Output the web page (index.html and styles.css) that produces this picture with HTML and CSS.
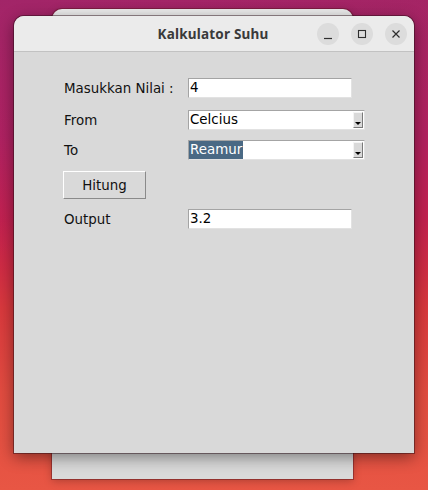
FILE: index.html
```html
<!DOCTYPE html>
<html>
<head>
<meta charset="utf-8">
<link rel="stylesheet" href="styles.css">
</head>
<body>
<div class="desktop">
  <div class="window back"></div>
  <div class="window main">
    <div class="titlebar">
      <div class="title">Kalkulator Suhu</div>
      <div class="controls">
        <span class="ctl"><svg width="22" height="22" viewBox="0 0 22 22"><path d="M7 15.5h8" stroke="#2e2e2e" stroke-width="1.2" fill="none"/></svg></span>
        <span class="ctl"><svg width="22" height="22" viewBox="0 0 22 22"><rect x="7.5" y="7.5" width="7" height="7" stroke="#2e2e2e" stroke-width="1.1" fill="none"/></svg></span>
        <span class="ctl"><svg width="22" height="22" viewBox="0 0 22 22"><path d="M7.5 7.5l7 7M14.5 7.5l-7 7" stroke="#2e2e2e" stroke-width="1.2" fill="none"/></svg></span>
      </div>
    </div>
    <div class="content">
      <div class="row r1">
        <label class="lbl">Masukkan Nilai :</label>
        <div class="entry">4</div>
      </div>
      <div class="row r2">
        <label class="lbl">From</label>
        <div class="combo"><span class="val">Celcius</span><span class="arrow"></span></div>
      </div>
      <div class="row r3">
        <label class="lbl">To</label>
        <div class="combo"><span class="val sel">Reamur</span><span class="arrow"></span></div>
      </div>
      <div class="row r4">
        <div class="btn">Hitung</div>
      </div>
      <div class="row r5">
        <label class="lbl">Output</label>
        <div class="entry">3.2</div>
      </div>
    </div>
  </div>
</div>
</body>
</html>
```
FILE: styles.css
```css
html, body {
  margin: 0;
  padding: 0;
}
body {
  width: 428px;
  height: 490px;
  overflow: hidden;
}
.desktop {
  position: relative;
  width: 428px;
  height: 490px;
  background:
    linear-gradient(160deg, rgba(150,40,120,0.25) 0%, rgba(150,40,120,0) 40%),
    linear-gradient(180deg, #a62463 0%, #b3215f 28%, #c4214f 45%, #d02c44 55%, #d9393d 63%, #e24c40 80%, #e85644 100%);
}
.window {
  position: absolute;
  box-sizing: border-box;
}
.back {
  left: 52px;
  top: 9px;
  width: 301px;
  height: 470px;
  background: #d9d9d9;
  border-radius: 10px 10px 0 0;
  box-shadow: 0 0 0 1px rgba(90,20,30,0.45), 0 2px 8px rgba(0,0,0,0.25);
  background-image: linear-gradient(180deg, #ececec 0, #ececec 36px, #d9d9d9 37px);
}
.main {
  left: 14px;
  top: 16px;
  width: 400px;
  height: 437px;
  background: #d9d9d9;
  border-radius: 10px 10px 0 0;
  box-shadow: 0 0 0 1px rgba(40,10,20,0.45), 0 4px 16px rgba(0,0,0,0.45);
  display: flex;
  flex-direction: column;
}
.titlebar {
  height: 36px;
  flex: none;
  box-sizing: border-box;
  background: #ebebeb;
  border-bottom: 1px solid #c2c2c2;
  border-radius: 10px 10px 0 0;
  position: relative;
  display: flex;
  align-items: center;
  justify-content: center;
}
.title {
  font-family: "Noto Sans", "DejaVu Sans", sans-serif;
  font-weight: 700;
  font-size: 13.5px;
  color: #3a3a3a;
  letter-spacing: 0.2px;
  margin-left: -2px;
}
.controls {
  position: absolute;
  right: 7px;
  top: 7px;
  display: flex;
  gap: 12px;
}
.ctl {
  width: 22px;
  height: 22px;
  border-radius: 50%;
  background: #dcdcdc;
  display: block;
}
.ctl svg { display: block; }
.content {
  padding: 26px 0 0 50px;
  font-family: "DejaVu Sans", sans-serif;
  font-size: 13.4px;
  color: #111;
}
.row {
  display: flex;
  align-items: center;
}
.lbl {
  width: 124px;
  flex: none;
}
.r2 { margin-top: 12px; }
.r3 { margin-top: 10px; }
.r4 { margin-top: 11px; }
.r5 { margin-top: 10px; }
.entry, .combo {
  box-sizing: border-box;
  height: 20px;
  background: #fff;
  border: 1px solid #a4a4a4;
  border-right-color: #e2e2e2;
  border-bottom-color: #e2e2e2;
  padding-left: 1px;
  line-height: 18px;
  color: #000;
}
.entry { width: 164px; }
.combo {
  width: 177px;
  display: flex;
  align-items: stretch;
  position: relative;
}
.val { flex: 1; }
.sel {
  flex: none;
  background: #4a6984;
  color: #fff;
  padding-right: 1px;
  margin-left: -1px;
  padding-left: 1px;
}
.combo .sel + .arrow { margin-left: auto; }
.arrow {
  flex: none;
  width: 10px;
  box-sizing: border-box;
  margin: 1px 1px 0 0;
  height: 16px;
  background: #d9d9d9;
  border: 1px solid #f4f4f4;
  border-right-color: #7a7a7a;
  border-bottom-color: #7a7a7a;
  position: relative;
}
.arrow::after {
  content: "";
  position: absolute;
  left: 1px;
  bottom: 2px;
  border-left: 3px solid transparent;
  border-right: 3px solid transparent;
  border-top: 3px solid #000;
}
.btn {
  box-sizing: border-box;
  width: 83px;
  height: 28px;
  margin-left: -1px;
  background: #d9d9d9;
  border: 1px solid #fff;
  border-right-color: #8a8a8a;
  border-bottom-color: #8a8a8a;
  display: flex;
  align-items: center;
  justify-content: center;
  color: #111;
}
```
